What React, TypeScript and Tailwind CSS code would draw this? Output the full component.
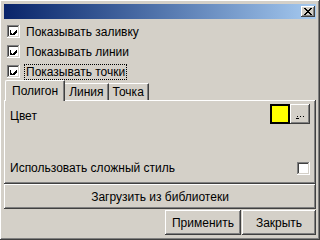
const raised =
  'shadow-[inset_-1px_-1px_#404040,inset_1px_1px_#ffffff,inset_-2px_-2px_#808080,inset_2px_2px_#d4d0c8]'
const sunken =
  'shadow-[inset_-1px_-1px_#ffffff,inset_1px_1px_#808080,inset_-2px_-2px_#d4d0c8,inset_2px_2px_#404040]'

function CheckBox({ checked }: { checked?: boolean }) {
  return (
    <div className={`w-[13px] h-[13px] bg-white flex items-center justify-center shrink-0 ${sunken}`}>
      {checked && (
        <svg width="7" height="7" viewBox="0 0 7 7" shapeRendering="crispEdges">
          <path d="M0 2h1v3h1v1h1v-1h1v-1h1v-1h1v-1h1v3h-1v1h-1v1h-1v1h-1v1h-1v-1h-1v-1h-1z" fill="#000" />
        </svg>
      )}
    </div>
  )
}

function Row({ label, focused }: { label: string; focused?: boolean }) {
  return (
    <div className="h-[13px] flex items-center gap-[4px]">
      <CheckBox checked />
      <span
        className={`leading-[14px] px-[1px] border border-dotted ${focused ? 'border-black' : 'border-transparent'}`}
      >
        {label}
      </span>
    </div>
  )
}

export default function App() {
  return (
    <div
      className={`w-[320px] h-[240px] bg-[#d4d0c8] p-[4px] flex flex-col text-[12px] text-black ${raised}`}
      style={{ fontFamily: '"Liberation Sans", Arial, sans-serif' }}
    >
      {/* Title bar */}
      <div className="h-[15px] shrink-0 flex items-center justify-end pr-[1px] bg-gradient-to-r from-[#0a246a] to-[#a6caf0]">
        <div className={`w-[14px] h-[11px] bg-[#d4d0c8] flex items-center justify-center ${raised}`}>
          <svg width="8" height="7" viewBox="0 0 8 7" shapeRendering="crispEdges">
            <path d="M0 0h2v1h1v1h2v-1h1v-1h2v1h-1v1h-1v1h-1v1h1v1h1v1h1v1h-2v-1h-1v-1h-2v1h-1v1h-2v-1h1v-1h1v-1h1v-1h-1v-1h-1v-1h-1z" fill="#000" />
          </svg>
        </div>
      </div>

      {/* Checkboxes */}
      <div className="h-[61px] shrink-0 flex flex-col gap-[7px] pt-[6px] pl-[3px]">
        <Row label="Показывать заливку" />
        <Row label="Показывать линии" />
        <Row label="Показывать точки" focused />
      </div>

      {/* Tabs */}
      <div className="h-[20px] shrink-0 flex items-end pl-[1px]">
        <div className="h-[21px] -mb-[1px] relative z-10 bg-[#d4d0c8] px-[6px] flex items-center border-l border-t border-white rounded-tl-[2px] shadow-[inset_-1px_0_#808080] border-r border-r-[#404040]">
          Полигон
        </div>
        <div className="h-[17px] bg-[#d4d0c8] px-[4px] flex items-center border-t border-white shadow-[inset_-1px_0_#808080] border-r border-r-[#404040]">
          Линия
        </div>
        <div className="h-[17px] bg-[#d4d0c8] px-[4px] flex items-center border-t border-white shadow-[inset_-1px_0_#808080] border-r border-r-[#404040]">
          Точка
        </div>
      </div>

      {/* Panel */}
      <div className={`h-[84px] shrink-0 flex flex-col px-[6px] pt-[4px] pb-[7px] ${raised}`}>
        <div className="flex items-start justify-between">
          <span className="pt-[3px]">Цвет</span>
          <div className="flex">
            <div className="w-[20px] h-[20px] bg-[#ffff00] border-2 border-black" />
            <div className={`w-[20px] h-[20px] bg-[#d4d0c8] flex items-end justify-center pb-[5px] ${raised}`}>
              <svg width="8" height="3" viewBox="0 0 8 3" shapeRendering="crispEdges">
                <path d="M1 0h1v1h-1zM4 0h1v1h-1zM7 0h1v1h-1zM0 2h3v1h-3z" fill="#000" />
              </svg>
            </div>
          </div>
        </div>
        <div className="mt-auto flex items-center justify-between">
          <span>Использовать сложный стиль</span>
          <CheckBox />
        </div>
      </div>

      {/* Load button */}
      <div className={`h-[25px] shrink-0 flex items-center justify-center ${raised}`}>
        Загрузить из библиотеки
      </div>

      {/* Bottom buttons */}
      <div className="flex-1 flex items-center justify-end gap-[1px]">
        <div className={`w-[76px] h-[25px] flex items-center justify-center ${raised}`}>Применить</div>
        <div className={`w-[74px] h-[25px] flex items-center justify-center ${raised}`}>Закрыть</div>
      </div>
    </div>
  )
}
